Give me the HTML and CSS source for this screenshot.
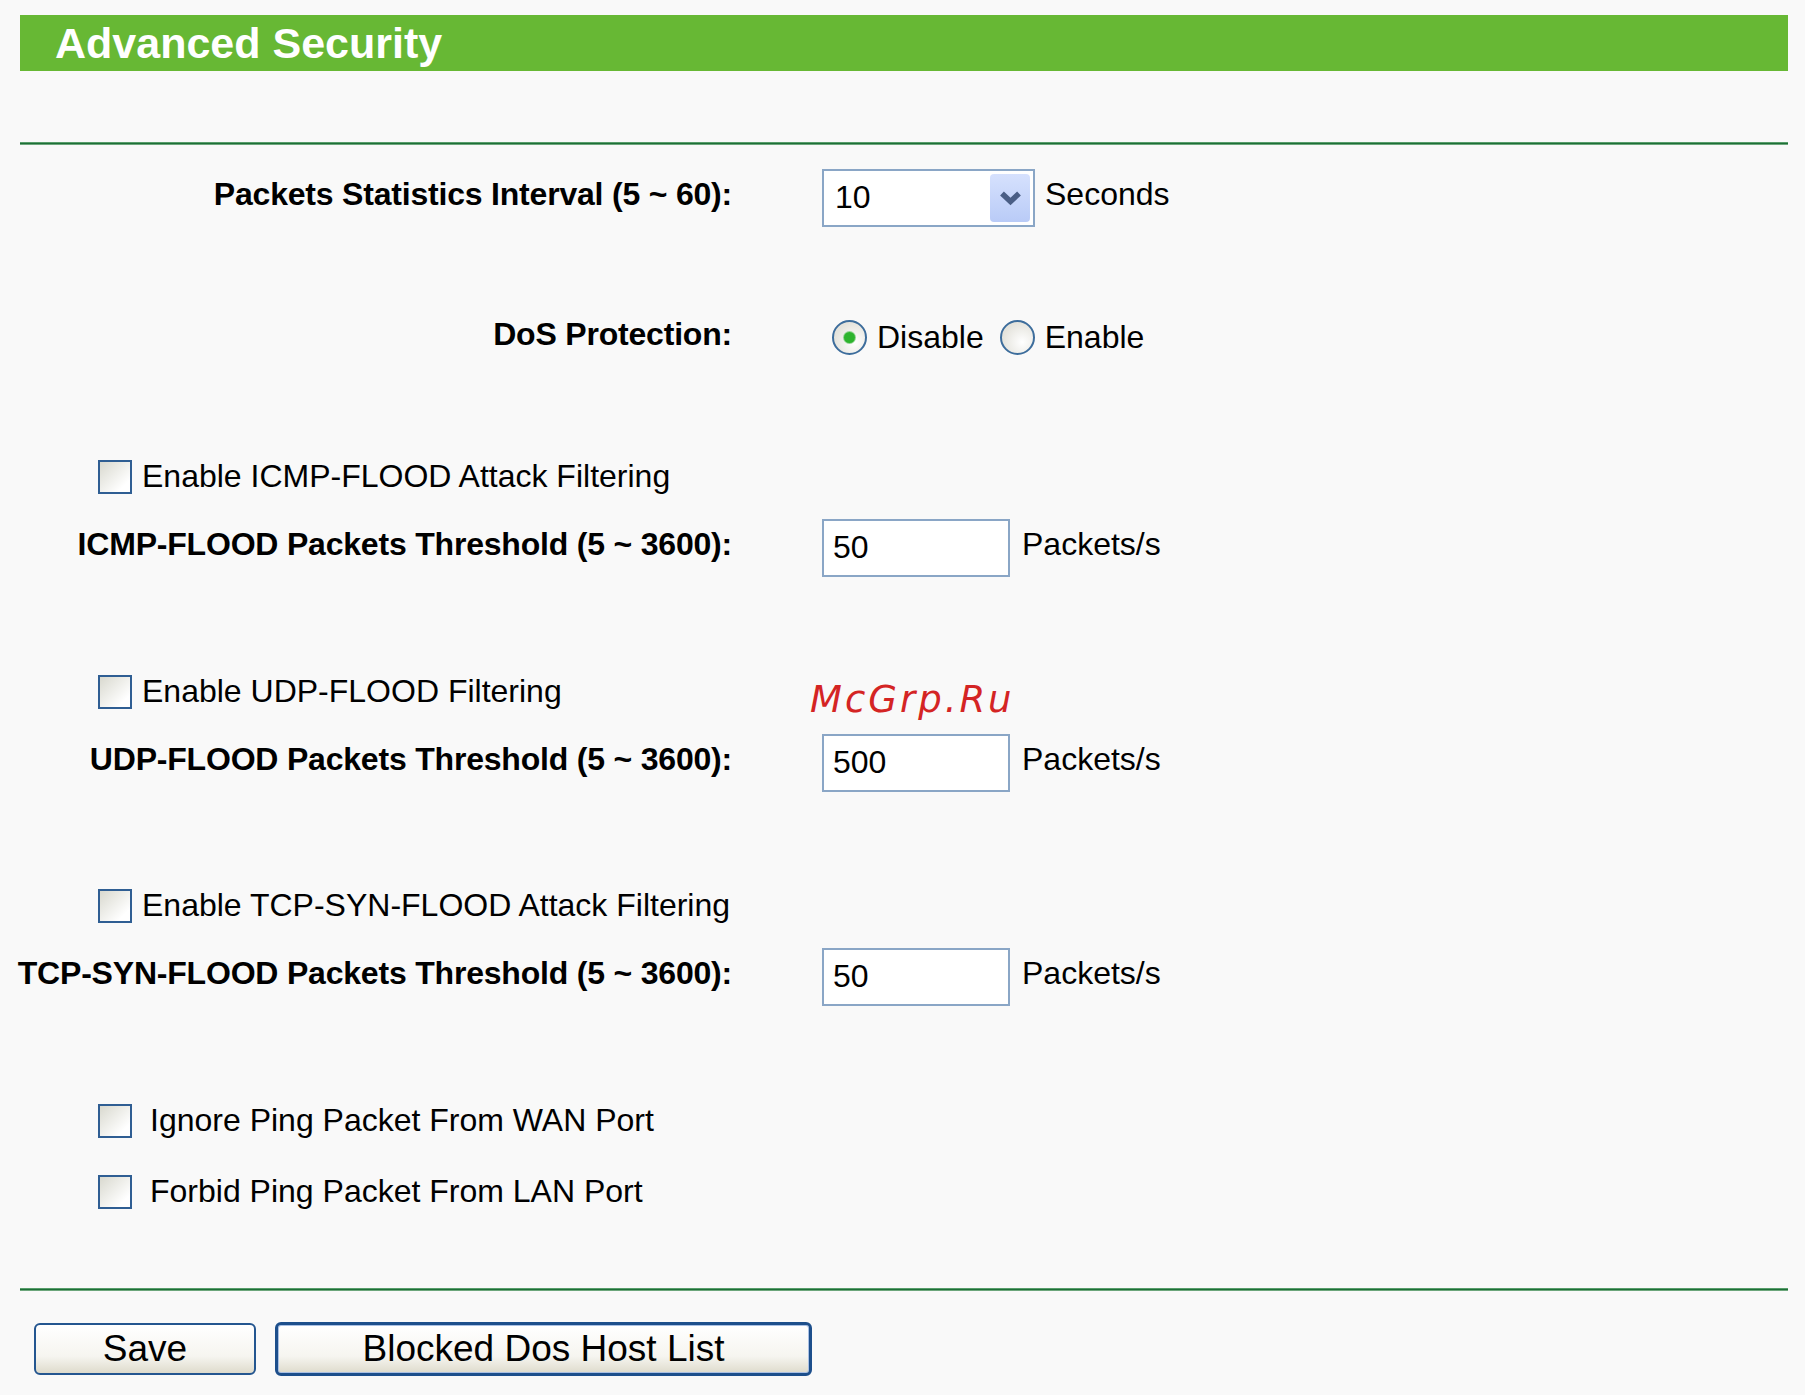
FILE: index.html
```html
<!DOCTYPE html>
<html lang="en">
<head>
  <meta charset="UTF-8" />
  <meta name="viewport" content="width=device-width, initial-scale=1.0" />
  <title>Advanced Security</title>
  <link rel="stylesheet" href="styles.css">
</head>
<body>
  <div class="page">
    <div class="title-bar"><h1>Advanced Security</h1></div>
    <div class="rule rule-top"></div>

    <form class="settings">
      <div class="group">
        <div class="row">
          <label class="row-label">Packets Statistics Interval (5 ~ 60):</label>
          <div class="row-value">
            <div class="select">
              <span class="select-text">10</span>
              <span class="select-btn">
                <svg width="40" height="48" viewBox="0 0 40 48"><path d="M12 19.5 L20.5 27.5 L29 19.5" fill="none" stroke="#4a5e85" stroke-width="5.5"/></svg>
              </span>
            </div>
            <span class="unit unit-seconds">Seconds</span>
          </div>
        </div>
      </div>

      <div class="group group-dos">
        <div class="row">
          <label class="row-label">DoS Protection:</label>
          <div class="row-value">
            <span class="radio radio-on first"></span><span class="radio-text">Disable</span>
            <span class="radio"></span><span class="radio-text">Enable</span>
          </div>
        </div>
      </div>

      <div class="group group-icmp">
        <div class="row check-row">
          <span class="checkbox"></span><span class="check-text">Enable ICMP-FLOOD Attack Filtering</span>
        </div>
        <div class="row">
          <label class="row-label">ICMP-FLOOD Packets Threshold (5 ~ 3600):</label>
          <div class="row-value">
            <input class="text-input" type="text" value="50">
            <span class="unit">Packets/s</span>
          </div>
        </div>
      </div>

      <div class="group group-udp">
        <div class="row check-row">
          <span class="checkbox"></span><span class="check-text">Enable UDP-FLOOD Filtering</span>
        </div>
        <div class="row">
          <label class="row-label">UDP-FLOOD Packets Threshold (5 ~ 3600):</label>
          <div class="row-value">
            <input class="text-input" type="text" value="500">
            <span class="unit">Packets/s</span>
          </div>
        </div>
      </div>

      <div class="group group-tcp">
        <div class="row check-row">
          <span class="checkbox"></span><span class="check-text">Enable TCP-SYN-FLOOD Attack Filtering</span>
        </div>
        <div class="row">
          <label class="row-label">TCP-SYN-FLOOD Packets Threshold (5 ~ 3600):</label>
          <div class="row-value">
            <input class="text-input" type="text" value="50">
            <span class="unit">Packets/s</span>
          </div>
        </div>
      </div>

      <div class="group group-ping">
        <div class="row check-row">
          <span class="checkbox"></span><span class="check-text check-wide">Ignore Ping Packet From WAN Port</span>
        </div>
        <div class="row check-row">
          <span class="checkbox"></span><span class="check-text check-wide">Forbid Ping Packet From LAN Port</span>
        </div>
      </div>
    </form>

    <div class="rule rule-bottom"></div>

    <div class="actions">
      <button class="btn btn-save" type="button">Save</button>
      <button class="btn btn-default" type="button">Blocked Dos Host List</button>
    </div>

    <div class="watermark">McGrp.Ru</div>
  </div>
</body>
</html>
```

FILE: styles.css
```css
body { margin: 0; background: #f9f9f9; font-family: "Liberation Sans", Arial, sans-serif; color: #000; }
.page { position: relative; width: 1768px; margin-left: 20px; padding-top: 15px; }

.title-bar { height: 56px; background: #67b834; }
.title-bar h1 { margin: 0; padding-left: 35px; font-size: 43px; line-height: 56px; font-weight: bold; color: #fff; }

.rule { height: 3px; background: linear-gradient(#8cc79a, #1e6f37 35%, #1e6f37 65%, #b3d9ba); }
.rule-top { margin-top: 71px; }
.rule-bottom { margin-top: 61px; }

.settings { margin-top: 17px; }
.group-dos { margin-top: 69px; }
.group-icmp { margin-top: 68px; }
.group-udp { margin-top: 73px; }
.group-tcp { margin-top: 72px; }
.group-ping { margin-top: 73px; }
.row { display: flex; align-items: center; height: 71px; font-size: 32px; }
.row-label { flex: none; display: flex; justify-content: flex-end; width: 712px; white-space: nowrap; font-weight: bold; letter-spacing: -0.2px; padding-bottom: 6px; }
.row-value { display: flex; align-items: center; margin-left: 90px; }

.select { display: flex; align-items: center; width: 213px; height: 58px; box-sizing: border-box; border: 2px solid #8aa6c6; background: #fff; }
.select-text { padding-left: 11px; }
.select-btn { display: flex; margin-left: auto; margin-right: 3px; width: 40px; height: 48px; border-radius: 4px; background: linear-gradient(#d6e1fd, #b9cbf7); }

.unit { margin-left: 12px; padding-bottom: 6px; }
.unit-seconds { margin-left: 10px; }

.text-input { width: 188px; height: 58px; box-sizing: border-box; border: 2px solid #8aa6c6; background: #fff; padding: 0 0 0 9px; font: 32px "Liberation Sans", Arial, sans-serif; color: #000; outline: none; }

.radio { flex: none; display: flex; align-items: center; justify-content: center; width: 35px; height: 35px; box-sizing: border-box; border: 2px solid #3d6d9c; border-radius: 50%; background: radial-gradient(circle at 65% 65%, #fff, #e4e3dc 70%); margin-left: 16px; }
.radio.first { margin-left: 10px; }
.radio-on::after { content: ''; width: 11px; height: 11px; border-radius: 50%; background: #2db42d; box-shadow: 0 0 0 1px #8fd38f; }
.radio-text { margin-left: 10px; }

.check-row { padding-left: 78px; }
.checkbox { flex: none; width: 34px; height: 34px; box-sizing: border-box; border: 2px solid #2f5e93; background: linear-gradient(135deg, #d9d9cf, #fff 80%); }
.check-text { margin-left: 10px; }
.check-wide { margin-left: 18px; }

.actions { display: flex; align-items: center; gap: 19px; margin-top: 31px; padding-left: 14px; }
.btn { height: 52px; width: 222px; box-sizing: border-box; border: 2px solid #245690; border-radius: 6px; background: linear-gradient(#fff, #f6f5f0 65%, #dedbcc); font: 37px "Liberation Sans", Arial, sans-serif; color: #000; padding: 0; }
.btn-default { width: 537px; height: 54px; border: 3px solid #1d4f8c; box-shadow: inset 0 0 0 1px #a9c0e4; }

.watermark { position: absolute; left: 790px; top: 681px; font-family: "DejaVu Sans", sans-serif; font-style: italic; font-size: 37px; line-height: 37px; letter-spacing: 3px; color: #d42424; }
```
